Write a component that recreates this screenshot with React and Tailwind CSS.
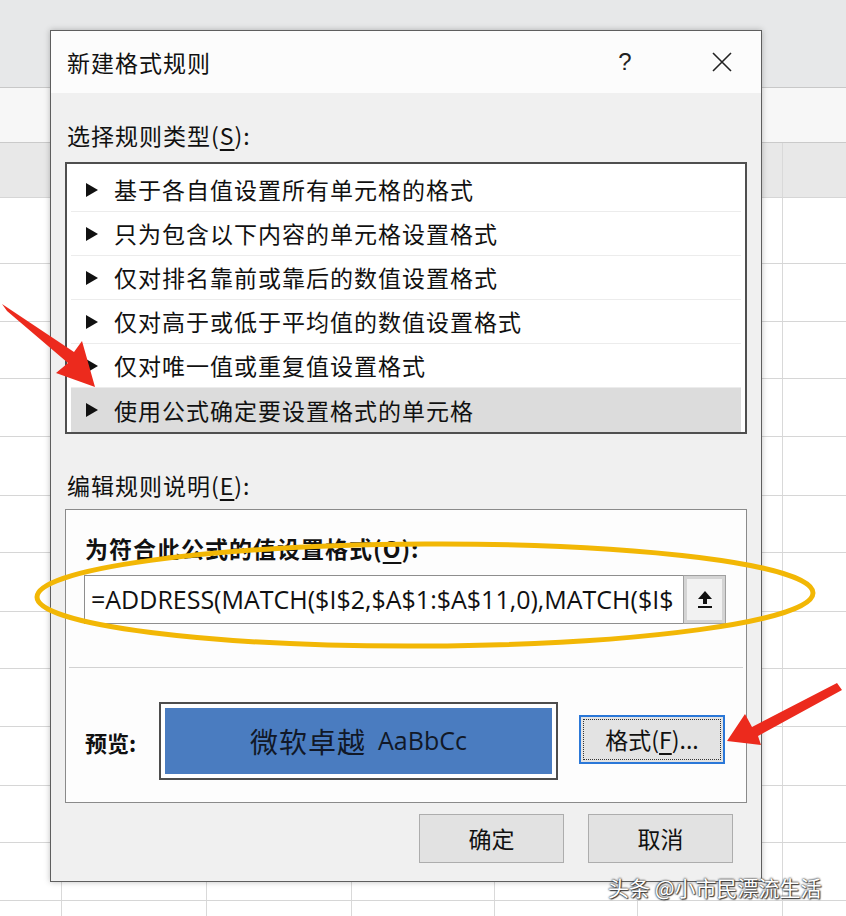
import React from "react";

const CJK = "font-['Microsoft_YaHei','Noto_Sans_CJK_SC',sans-serif]";

const rows = [66, 58, 57, 58, 59, 57, 59, 57, 58, 59, 57, 58, 30];
const cols = [62, 145, 145, 143, 143, 145, 63];

function SheetRow({ h, className = "" }) {
  return (
    <div className={`flex shrink-0 border-b border-[#d6d6d6] ${className}`} style={{ height: h }}>
      {cols.map((w, i) => (
        <div
          key={i}
          className={i < cols.length - 1 ? "h-full border-r border-[#d9d9d9]" : "h-full"}
          style={{ width: w }}
        />
      ))}
    </div>
  );
}

function Tri() {
  return (
    <svg width="12" height="14" viewBox="0 0 12 14" className="shrink-0">
      <polygon points="0,0 12,7 0,14" fill="#111" />
    </svg>
  );
}

const items = [
  "基于各自值设置所有单元格的格式",
  "只为包含以下内容的单元格设置格式",
  "仅对排名靠前或靠后的数值设置格式",
  "仅对高于或低于平均值的数值设置格式",
  "仅对唯一值或重复值设置格式",
  "使用公式确定要设置格式的单元格",
];

export default function App() {
  return (
    <div className={`relative w-[846px] h-[916px] overflow-hidden bg-white ${CJK}`}>
      {/* spreadsheet background */}
      <div className="flex flex-col w-full h-full">
        <div className="h-[88px] shrink-0 bg-[#e7e8e9] border-b border-[#c8c8c8]" />
        <div className="h-[55px] shrink-0 bg-[#f7f7f7] border-b border-[#cacaca]" />
        <SheetRow h={55} className="bg-[#e8e8e8] border-[#c4c4c4]" />
        {rows.map((h, i) => (
          <SheetRow key={i} h={h} />
        ))}
      </div>

      {/* dialog window */}
      <div className="absolute left-[50px] top-[30px] w-[712px] h-[852px] flex flex-col border border-[#5e5e5e] bg-[#f0f0f0] shadow-[0_0_6px_rgba(0,0,0,0.25)] text-[#111]">
        {/* title bar */}
        <div className="h-[62px] shrink-0 bg-[#fcfcfc] flex items-center pl-[16px]">
          <span className="text-[23px] tracking-[1px] flex-1">新建格式规则</span>
          <span className="text-[24px] w-[20px] text-center mr-[76px] font-['Liberation_Sans',sans-serif] text-[#222]">?</span>
          <svg width="22" height="22" viewBox="0 0 22 22" className="mr-[28px]">
            <path d="M2 2 L20 20 M20 2 L2 20" stroke="#222" strokeWidth="1.6" />
          </svg>
        </div>

        {/* body */}
        <div className="flex flex-col px-[14px] pt-[26px]">
          <div className="h-[32px] leading-[32px] text-[23px] tracking-[1px] pl-[2px]">
            选择规则类型(<span className="underline underline-offset-[4px]">S</span>):
          </div>

          <div className="mt-[11px] h-[272px] border-2 border-[#4f4f4f] bg-white p-[4px] flex flex-col">
            {items.map((t, i) => (
              <div
                key={i}
                className={`h-[44px] shrink-0 flex items-center pl-[15px] gap-[16px] ${
                  i === 5 ? "bg-[#dcdcdc]" : "border-b border-[#ececec]"
                }`}
              >
                <Tri />
                <span className="text-[23px] tracking-[1px] whitespace-nowrap">{t}</span>
              </div>
            ))}
          </div>

          <div className="mt-[35px] h-[32px] leading-[32px] text-[23px] tracking-[1px] pl-[2px]">
            编辑规则说明(<span className="underline underline-offset-[4px]">E</span>):
          </div>

          <div className="mt-[8px] h-[294px] border border-[#8a8a8a] bg-[#fdfdfd] flex flex-col px-[3px]">
            <div className="mt-[22px] ml-[16px] h-[32px] leading-[32px] text-[23px] font-bold tracking-[1px] whitespace-nowrap">
              为符合此公式的值设置格式(<span className="underline underline-offset-[4px]">O</span>):
            </div>
            <div className="mt-[11px] ml-[15px] flex h-[49px] w-[642px]">
              <div className="flex-1 h-full border border-[#8e8e8e] border-r-0 bg-white flex items-center pl-[6px] overflow-hidden">
                <span className="whitespace-nowrap text-[25px] font-['Open_Sans','Noto_Sans',sans-serif] text-[#111]">
                  =ADDRESS(MATCH($I$2,$A$1:$A$11,0),MATCH($I$
                </span>
              </div>
              <div className="w-[43px] h-full border border-[#a0a0a0] bg-[#d4d4d4] p-[3px] flex">
                <div className="flex-1 bg-[#f2f2f2] flex items-center justify-center">
                  <svg width="16" height="20" viewBox="0 0 16 20">
                    <polygon points="8,1 15,9 10,9 10,14 6,14 6,9 1,9" fill="#111" />
                    <rect x="1" y="16" width="14" height="2" fill="#111" />
                  </svg>
                </div>
              </div>
            </div>
            <div className="mt-[43px] h-px bg-[#d2d2d2]" />
            <div className="mt-[34px] flex items-start">
              <div className="mt-[26px] ml-[16px] w-[74px] text-[22px] font-bold leading-[28px]">预览:</div>
              <div className="w-[399px] h-[78px] border-2 border-[#4d4d4d] bg-white p-[4px]">
                <div className="w-full h-full bg-[#4a7cc0] flex items-center justify-center gap-[12px] text-[#111827]">
                  <span className="text-[28px] tracking-[1px]">微软卓越</span>
                  <span className="text-[25px] font-['Open_Sans','Noto_Sans',sans-serif]">AaBbCc</span>
                </div>
              </div>
              <div className="mt-[13px] ml-[21px] w-[146px] h-[49px] border-2 border-[#2b78d8] bg-[#e3e3e3] p-[2px]">
                <div className="w-full h-full border border-dotted border-[#333] flex items-center justify-center text-[23px]">
                  格式(<span className="underline underline-offset-[4px]">F</span>)...
                </div>
              </div>
            </div>
          </div>

          <div className="mt-[11px] flex justify-end gap-[24px] pr-[14px]">
            <div className="w-[145px] h-[49px] border border-[#adadad] bg-[#e2e2e2] flex items-center justify-center text-[23px]">
              确定
            </div>
            <div className="w-[145px] h-[49px] border border-[#adadad] bg-[#e2e2e2] flex items-center justify-center text-[23px]">
              取消
            </div>
          </div>
        </div>
      </div>

      {/* annotations */}
      <svg className="absolute left-0 top-0 pointer-events-none" width="846" height="916" viewBox="0 0 846 916">
        <ellipse cx="425" cy="595" rx="388" ry="51" fill="none" stroke="#f2b705" strokeWidth="5" transform="rotate(-0.3 425 595)" />
        <polygon points="2,304 74,352 82,341 95,387 56,373 68,363 7,311" fill="#ec2a1d" />
        <polygon points="837,683 842,690 758,736 761,745 727,741 745,714 752,727" fill="#ec2a1d" />
      </svg>

      {/* watermark */}
      <div className="absolute left-[608px] top-[872px] text-[21px] text-white whitespace-nowrap [text-shadow:0_0_2px_#333,0_0_2px_#333,1px_1px_1px_#444]">
        头条 @小市民漂流生活
      </div>
    </div>
  );
}
